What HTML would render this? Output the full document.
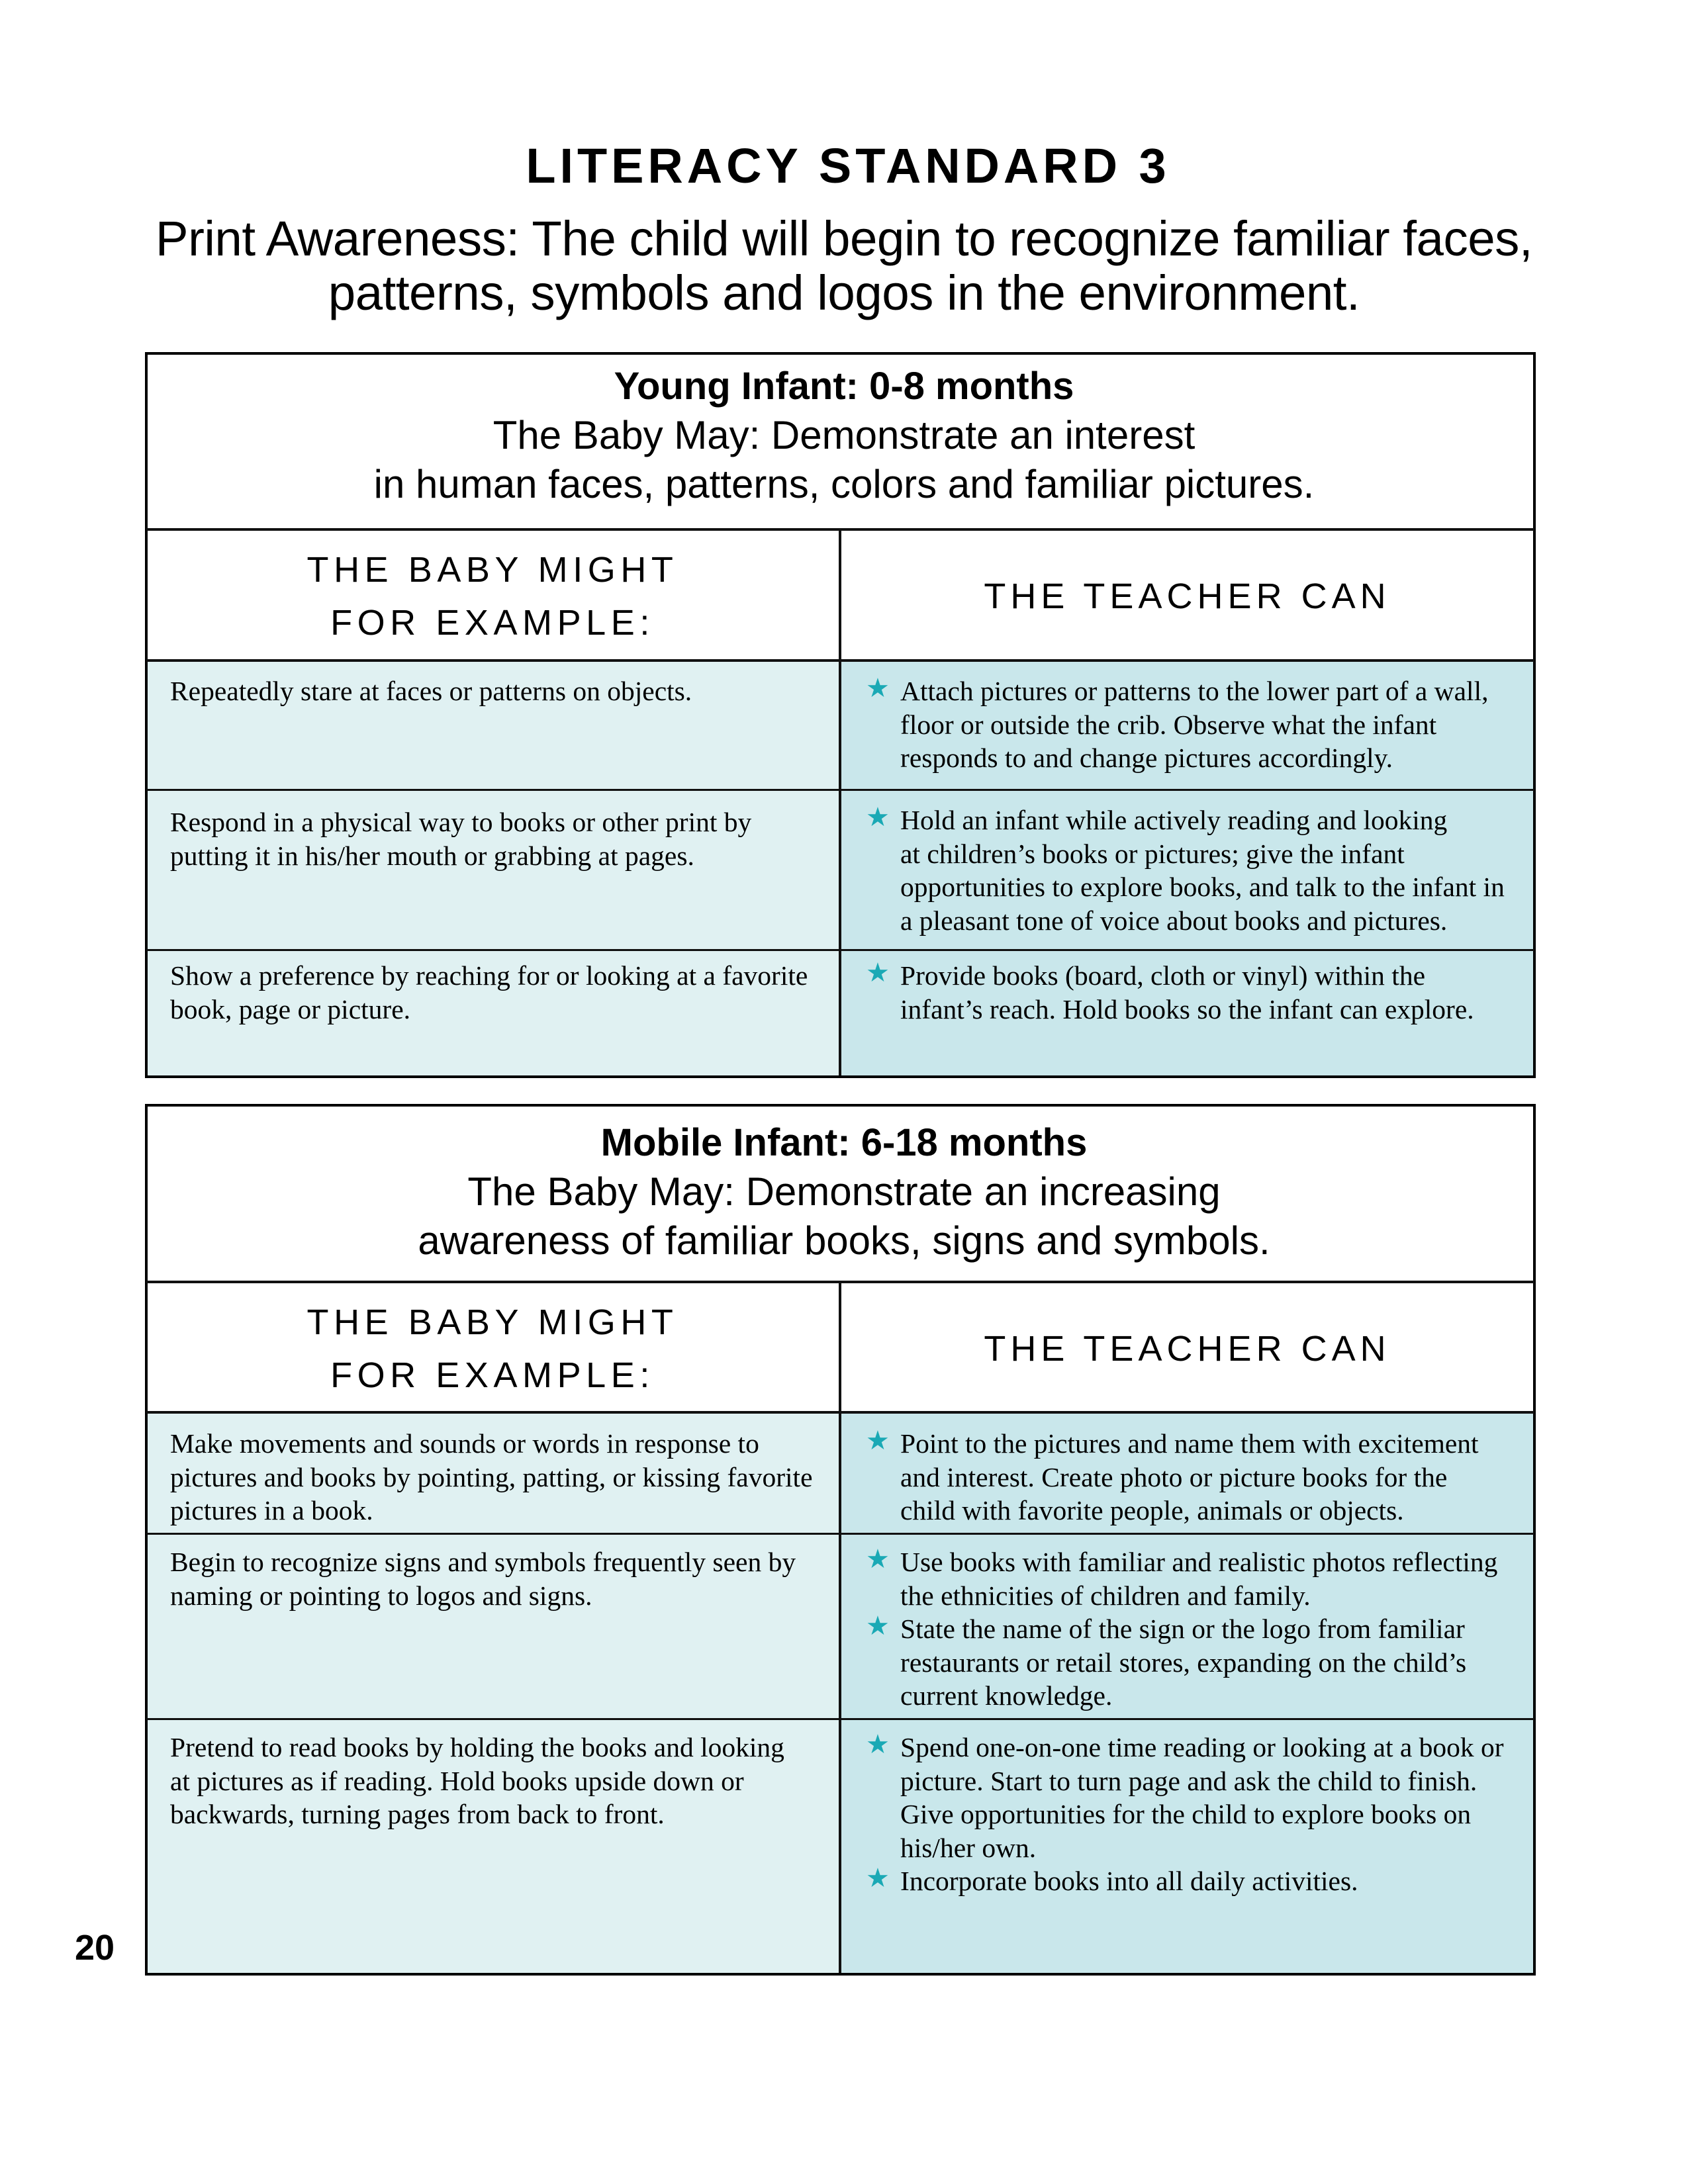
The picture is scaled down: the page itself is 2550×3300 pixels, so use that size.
<!DOCTYPE html>
<html><head><meta charset="utf-8">
<style>
*{margin:0;padding:0;box-sizing:border-box}
body{width:2550px;height:3300px;background:#fff;position:relative;overflow:hidden;font-family:"Liberation Sans",sans-serif;color:#000}
.a{position:absolute}
.c{position:absolute;left:0;width:2550px;text-align:center;white-space:nowrap}
.box{position:absolute;border:4.5px solid #000}
.hl{position:absolute;height:4px;background:#111}
.vl{position:absolute;width:4px;background:#111}
.lc{position:absolute;background:#e0f1f2}
.rc{position:absolute;background:#c9e7eb}
.t{position:absolute;font-family:"Liberation Serif",serif;font-size:41.5px;line-height:50.5px;white-space:nowrap}
.s{position:absolute;left:-52px;color:#1aa9b5;font-family:"DejaVu Sans",sans-serif;font-size:40px}
.ch{position:absolute;text-align:center;font-size:54px;letter-spacing:0.14em;line-height:80px;white-space:nowrap}
.hb{font-weight:bold;font-size:58px}
.hs{font-size:60px}
</style></head><body>

<div class="c" style="top:211px;font-size:74px;font-weight:bold;letter-spacing:0.08em;line-height:80px;left:6px">LITERACY STANDARD 3</div>
<div class="c" style="top:320px;font-size:74.5px;line-height:82px;letter-spacing:-0.5px">Print Awareness: The child will begin to recognize familiar faces,<br>patterns, symbols and logos in the environment.</div>

<!-- Table 1 -->
<div class="lc" style="left:221px;top:998px;width:1048px;height:629px"></div>
<div class="rc" style="left:1269px;top:998px;width:1049px;height:629px"></div>
<div class="box" style="left:219px;top:532px;width:2101px;height:1097px"></div>
<div class="hl" style="left:221px;top:798px;width:2097px"></div>
<div class="hl" style="left:221px;top:996px;width:2097px"></div>
<div class="hl" style="left:221px;top:1192px;width:2097px;height:3px"></div>
<div class="hl" style="left:221px;top:1434px;width:2097px;height:3px"></div>
<div class="vl" style="left:1267px;top:800px;height:825px"></div>

<div class="c hb" style="top:552px;left:0px;line-height:64px">Young Infant: 0-8 months</div>
<div class="c hs" style="top:621px;left:0px;line-height:74px">The Baby May: Demonstrate an interest<br>in human faces, patterns, colors and familiar pictures.</div>
<div class="ch" style="left:221px;width:1046px;top:821px">THE BABY MIGHT<br>FOR EXAMPLE:</div>
<div class="ch" style="left:1269px;width:1049px;top:861px;letter-spacing:0.13em">THE TEACHER CAN</div>

<div class="t" style="left:257px;top:1019px">Repeatedly stare at faces or patterns on objects.</div>
<div class="t" style="left:1360px;top:1019px"><span class="s" style="top:-4px">★</span>Attach pictures or patterns to the lower part of a wall,<br>floor or outside the crib. Observe what the infant<br>responds to and change pictures accordingly.</div>

<div class="t" style="left:257px;top:1217px">Respond in a physical way to books or other print by<br>putting it in his/her mouth or grabbing at pages.</div>
<div class="t" style="left:1360px;top:1214px"><span class="s" style="top:-4px">★</span>Hold an infant while actively reading and looking<br>at children’s books or pictures; give the infant<br>opportunities to explore books, and talk to the infant in<br>a pleasant tone of voice about books and pictures.</div>

<div class="t" style="left:257px;top:1449px">Show a preference by reaching for or looking at a favorite<br>book, page or picture.</div>
<div class="t" style="left:1360px;top:1449px"><span class="s" style="top:-4px">★</span>Provide books (board, cloth or vinyl) within the<br>infant’s reach. Hold books so the infant can explore.</div>

<!-- Table 2 -->
<div class="lc" style="left:221px;top:2134px;width:1048px;height:849px"></div>
<div class="rc" style="left:1269px;top:2134px;width:1049px;height:849px"></div>
<div class="box" style="left:219px;top:1668px;width:2101px;height:1317px"></div>
<div class="hl" style="left:221px;top:1935px;width:2097px"></div>
<div class="hl" style="left:221px;top:2132px;width:2097px"></div>
<div class="hl" style="left:221px;top:2316px;width:2097px;height:3px"></div>
<div class="hl" style="left:221px;top:2596px;width:2097px;height:3px"></div>
<div class="vl" style="left:1267px;top:1937px;height:1044px"></div>

<div class="c hb" style="top:1695px;left:0px;line-height:64px">Mobile Infant: 6-18 months</div>
<div class="c hs" style="top:1764px;left:0px;line-height:74px">The Baby May: Demonstrate an increasing<br>awareness of familiar books, signs and symbols.</div>
<div class="ch" style="left:221px;width:1046px;top:1958px">THE BABY MIGHT<br>FOR EXAMPLE:</div>
<div class="ch" style="left:1269px;width:1049px;top:1998px;letter-spacing:0.13em">THE TEACHER CAN</div>

<div class="t" style="left:257px;top:2156px">Make movements and sounds or words in response to<br>pictures and books by pointing, patting, or kissing favorite<br>pictures in a book.</div>
<div class="t" style="left:1360px;top:2156px"><span class="s" style="top:-4px">★</span>Point to the pictures and name them with excitement<br>and interest. Create photo or picture books for the<br>child with favorite people, animals or objects.</div>

<div class="t" style="left:257px;top:2335px">Begin to recognize signs and symbols frequently seen by<br>naming or pointing to logos and signs.</div>
<div class="t" style="left:1360px;top:2335px"><span class="s" style="top:-4px">★</span><span class="s" style="top:97px">★</span>Use books with familiar and realistic photos reflecting<br>the ethnicities of children and family.<br>State the name of the sign or the logo from familiar<br>restaurants or retail stores, expanding on the child’s<br>current knowledge.</div>

<div class="t" style="left:257px;top:2615px">Pretend to read books by holding the books and looking<br>at pictures as if reading. Hold books upside down or<br>backwards, turning pages from back to front.</div>
<div class="t" style="left:1360px;top:2615px"><span class="s" style="top:-4px">★</span><span class="s" style="top:198px">★</span>Spend one-on-one time reading or looking at a book or<br>picture. Start to turn page and ask the child to finish.<br>Give opportunities for the child to explore books on<br>his/her own.<br>Incorporate books into all daily activities.</div>

<div class="a" style="left:113px;top:2915px;font-size:54px;font-weight:bold;line-height:56px">20</div>
</body></html>
